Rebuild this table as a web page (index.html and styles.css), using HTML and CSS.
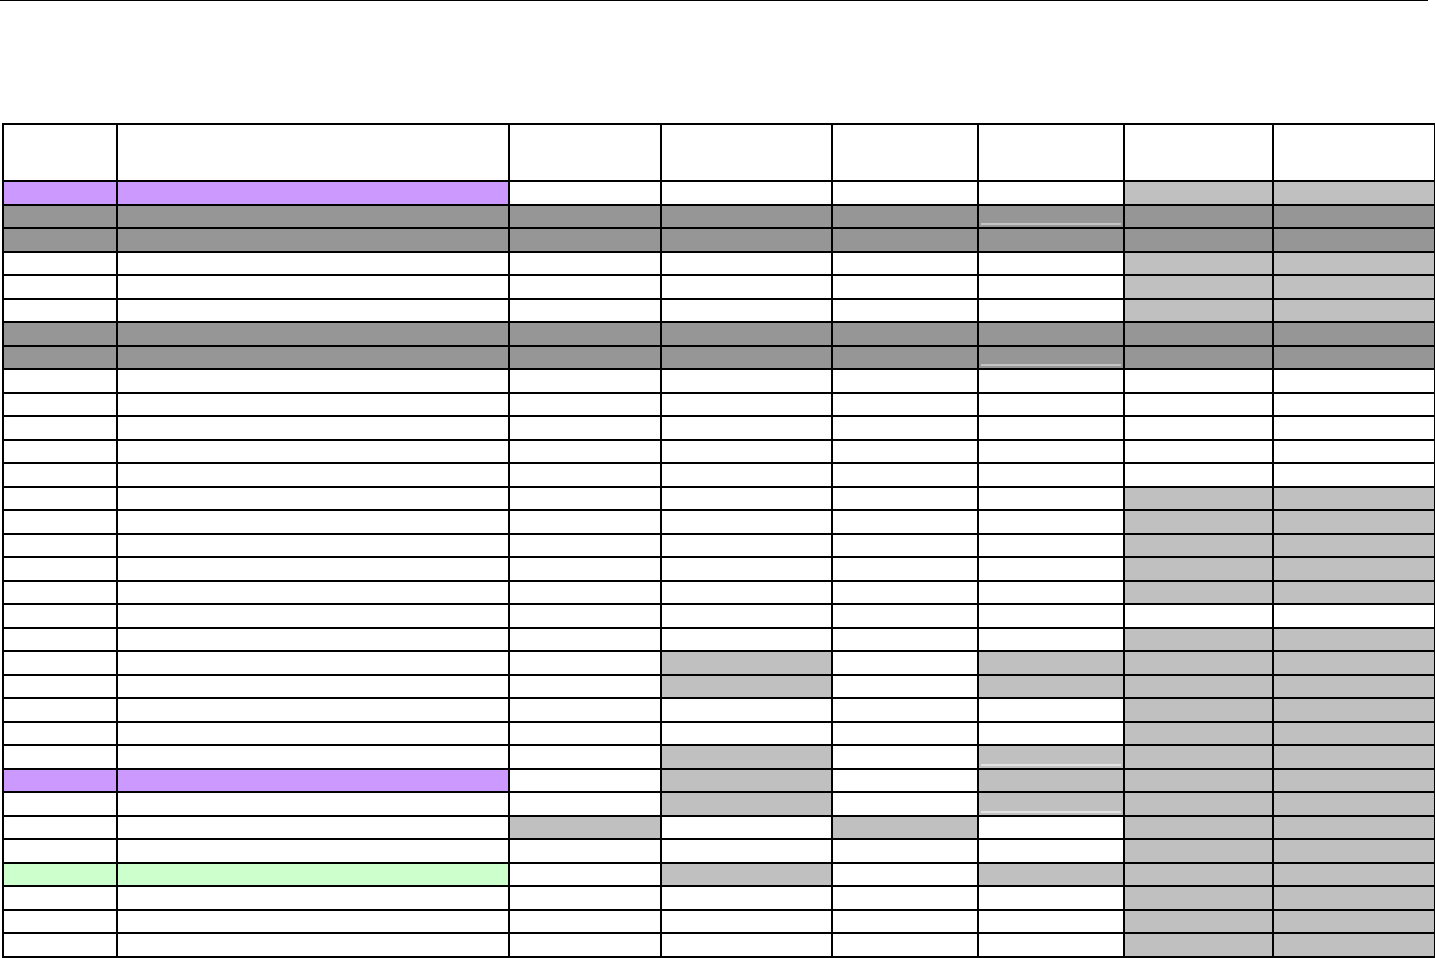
FILE: index.html
```html
<!DOCTYPE html>
<html>
<head>
<meta charset="utf-8">
<link rel="stylesheet" href="styles.css">
</head>
<body>
<div class="topline"></div>
<div class="spacer"></div>
<table class="grid">
<colgroup>
<col class="c0"><col class="c1"><col class="c2"><col class="c3"><col class="c4"><col class="c5"><col class="c6"><col class="c7">
</colgroup>
<tr class="head"><td></td><td></td><td></td><td></td><td></td><td></td><td></td><td></td></tr>
<tr><td class="p"></td><td class="p"></td><td></td><td></td><td></td><td></td><td class="g"></td><td class="g"></td></tr>
<tr><td class="d"></td><td class="d"></td><td class="d"></td><td class="d"></td><td class="d"></td><td class="d ln"></td><td class="d"></td><td class="d"></td></tr>
<tr><td class="d"></td><td class="d"></td><td class="d"></td><td class="d"></td><td class="d"></td><td class="d"></td><td class="d"></td><td class="d"></td></tr>
<tr><td></td><td></td><td></td><td></td><td></td><td></td><td class="g"></td><td class="g"></td></tr>
<tr><td></td><td></td><td></td><td></td><td></td><td></td><td class="g"></td><td class="g"></td></tr>
<tr><td></td><td></td><td></td><td></td><td></td><td></td><td class="g"></td><td class="g"></td></tr>
<tr><td class="d"></td><td class="d"></td><td class="d"></td><td class="d"></td><td class="d"></td><td class="d"></td><td class="d"></td><td class="d"></td></tr>
<tr><td class="d"></td><td class="d"></td><td class="d"></td><td class="d"></td><td class="d"></td><td class="d ln"></td><td class="d"></td><td class="d"></td></tr>
<tr><td></td><td></td><td></td><td></td><td></td><td></td><td></td><td></td></tr>
<tr><td></td><td></td><td></td><td></td><td></td><td></td><td></td><td></td></tr>
<tr><td></td><td></td><td></td><td></td><td></td><td></td><td></td><td></td></tr>
<tr><td></td><td></td><td></td><td></td><td></td><td></td><td></td><td></td></tr>
<tr><td></td><td></td><td></td><td></td><td></td><td></td><td></td><td></td></tr>
<tr><td></td><td></td><td></td><td></td><td></td><td></td><td class="g"></td><td class="g"></td></tr>
<tr><td></td><td></td><td></td><td></td><td></td><td></td><td class="g"></td><td class="g"></td></tr>
<tr><td></td><td></td><td></td><td></td><td></td><td></td><td class="g"></td><td class="g"></td></tr>
<tr><td></td><td></td><td></td><td></td><td></td><td></td><td class="g"></td><td class="g"></td></tr>
<tr><td></td><td></td><td></td><td></td><td></td><td></td><td class="g"></td><td class="g"></td></tr>
<tr><td></td><td></td><td></td><td></td><td></td><td></td><td></td><td></td></tr>
<tr><td></td><td></td><td></td><td></td><td></td><td></td><td class="g"></td><td class="g"></td></tr>
<tr><td></td><td></td><td></td><td class="g"></td><td></td><td class="g"></td><td class="g"></td><td class="g"></td></tr>
<tr><td></td><td></td><td></td><td class="g"></td><td></td><td class="g"></td><td class="g"></td><td class="g"></td></tr>
<tr><td></td><td></td><td></td><td></td><td></td><td></td><td class="g"></td><td class="g"></td></tr>
<tr><td></td><td></td><td></td><td></td><td></td><td></td><td class="g"></td><td class="g"></td></tr>
<tr><td></td><td></td><td></td><td class="g"></td><td></td><td class="g ln lnl"></td><td class="g"></td><td class="g"></td></tr>
<tr><td class="p"></td><td class="p"></td><td></td><td class="g"></td><td></td><td class="g"></td><td class="g"></td><td class="g"></td></tr>
<tr><td></td><td></td><td></td><td class="g"></td><td></td><td class="g ln lnl"></td><td class="g"></td><td class="g"></td></tr>
<tr><td></td><td></td><td class="g"></td><td></td><td class="g"></td><td></td><td class="g"></td><td class="g"></td></tr>
<tr><td></td><td></td><td></td><td></td><td></td><td></td><td class="g"></td><td class="g"></td></tr>
<tr><td class="n"></td><td class="n"></td><td></td><td class="g"></td><td></td><td class="g"></td><td class="g"></td><td class="g"></td></tr>
<tr><td></td><td></td><td></td><td></td><td></td><td></td><td class="g"></td><td class="g"></td></tr>
<tr><td></td><td></td><td></td><td></td><td></td><td></td><td class="g"></td><td class="g"></td></tr>
<tr><td></td><td></td><td></td><td></td><td></td><td></td><td class="g"></td><td class="g"></td></tr>
</table>
</body>
</html>
```
FILE: styles.css
```css
html, body {
  margin: 0;
  padding: 0;
  background: #ffffff;
  font-family: "Liberation Sans", Arial, sans-serif;
}

.topline {
  width: 1428px;
  height: 0;
  border-top: 1px solid #000000;
}

.spacer {
  height: 122px;
}

.grid {
  margin-left: 2px;
  border-collapse: collapse;
  table-layout: fixed;
  width: 1432px;
}

.c0 { width: 114px; }
.c1 { width: 392px; }
.c2 { width: 152px; }
.c3 { width: 171px; }
.c4 { width: 146px; }
.c5 { width: 146px; }
.c6 { width: 149px; }
.c7 { width: 162px; }

.grid td {
  border: 2px solid #000000;
  padding: 0;
  height: 21.5px;
  background: #ffffff;
}

.grid tr.head td {
  height: 55px;
}

.grid td.p { background: #cc99ff; }
.grid td.d { background: #969696; }
.grid td.g { background: #c0c0c0; }
.grid td.n { background: #ccffcc; }

.grid td.ln {
  background-image: linear-gradient(to top, transparent 2px, #c4c4c4 2px, #c4c4c4 4px, transparent 4px);
  background-size: calc(100% - 4px) 100%;
  background-position: 2px 0;
  background-repeat: no-repeat;
}

.grid td.ln.lnl {
  background-image: linear-gradient(to top, transparent 2px, #e2e2e2 2px, #e2e2e2 4px, transparent 4px);
}
```
